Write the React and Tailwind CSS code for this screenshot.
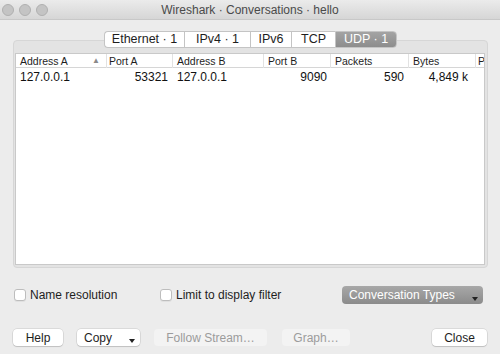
import React from "react";

const cols = "grid grid-cols-[91px_66px_91px_67px_78px_67px_1fr]";

const TrafficLight = () => (
  <div className="w-[12px] h-[12px] rounded-full bg-[#c4c4c4] border border-[#b0b0b0]" />
);

const Tab = ({ label, first, last, active }) => (
  <div
    className={
      "h-[17px] flex items-center justify-center text-[12.5px] leading-none border-y border-l border-[#c4c4c4] " +
      (first ? "rounded-l-[4px] " : "") +
      (last ? "rounded-r-[4px] border-r " : "") +
      (active
        ? "bg-gradient-to-b from-[#a3a3a3] to-[#8d8d8d] text-white border-[#8d8d8d]"
        : "bg-white text-[#1e1e1e]")
    }
  >
    {label}
  </div>
);

const Checkbox = ({ label }) => (
  <label className="flex items-center gap-[4px] text-[12px] text-[#1e1e1e]">
    <span className="w-[12px] h-[12px] rounded-[3px] bg-white border border-[#bdbdbd] shadow-[0_1px_0_rgba(0,0,0,0.05)]" />
    {label}
  </label>
);

const Button = ({ label, width, disabled, arrow }) => (
  <div
    className={
      "relative h-[17px] rounded-[4px] flex items-center text-[12px] leading-none " +
      width +
      (disabled
        ? " bg-[#f3f3f3] text-[#9c9c9c] justify-center"
        : " bg-white text-[#1e1e1e] shadow-[0_0_0_0.5px_rgba(0,0,0,0.15),0_1px_1px_rgba(0,0,0,0.12)]") +
      (arrow ? " pl-[7px]" : disabled ? "" : " justify-center")
    }
  >
    {label}
    {arrow && (
      <span className="absolute right-[5px] bottom-[3px] w-0 h-0 border-l-[3px] border-r-[3px] border-t-[4px] border-l-transparent border-r-transparent border-t-[#222]" />
    )}
  </div>
);

export default function App() {
  return (
    <div className="w-[500px] h-[354px] bg-[#ececec] flex flex-col font-['Liberation_Sans',Arial,sans-serif] overflow-hidden">
      {/* title bar */}
      <div className="relative h-[20px] flex items-center bg-gradient-to-b from-[#ebebeb] to-[#d6d6d6] border-b border-[#c8c8c8]">
        <div className="flex gap-[5px] ml-[2px]">
          <TrafficLight />
          <TrafficLight />
          <TrafficLight />
        </div>
        <div className="absolute inset-0 flex items-center justify-center text-[12px] text-[#4a4a4a]">
          Wireshark · Conversations · hello
        </div>
      </div>

      {/* tabs */}
      <div className="relative z-10 mt-[11px] flex justify-center">
        <div className="flex ml-[1px]">
          <div className="w-[80px]"><Tab label="Ethernet · 1" first /></div>
          <div className="w-[66px]"><Tab label="IPv4 · 1" /></div>
          <div className="w-[41px]"><Tab label="IPv6" /></div>
          <div className="w-[44px]"><Tab label="TCP" /></div>
          <div className="w-[62px]"><Tab label="UDP · 1" last active /></div>
        </div>
      </div>

      {/* panel */}
      <div className="mt-[-8px] ml-[13px] mr-[12px] h-[228px] bg-[#e3e3e3] border border-[#d6d6d6] rounded-[4px] pt-[12px] pl-[1px] pr-[2px] pb-[2px]">
        <div className="h-full bg-white border border-[#c9c9c9] overflow-hidden">
          <div className={cols + " h-[14px] text-[10.5px] leading-[14px] text-[#1e1e1e] border-b border-[#d6d6d6] bg-white"}>
            <div className="pl-[4px] flex justify-between pr-[6px] border-r border-[#e2e2e2]">
              <span>Address A</span>
              <span className="text-[8px] text-[#8a8a8a]">▲</span>
            </div>
            <div className="pl-[2px] border-r border-[#e2e2e2]">Port A</div>
            <div className="pl-[4px] border-r border-[#e2e2e2]">Address B</div>
            <div className="pl-[4px] border-r border-[#e2e2e2]">Port B</div>
            <div className="pl-[4px] border-r border-[#e2e2e2]">Packets</div>
            <div className="pl-[4px] border-r border-[#e2e2e2]">Bytes</div>
            <div className="pl-[2px] whitespace-nowrap">Pa</div>
          </div>
          <div className={cols + " h-[15px] text-[12px] leading-[15px] text-[#111] mt-[2px]"}>
            <div className="pl-[4px]">127.0.0.1</div>
            <div className="text-right pr-[5px]">53321</div>
            <div className="pl-[4px]">127.0.0.1</div>
            <div className="text-right pr-[4px]">9090</div>
            <div className="text-right pr-[5px]">590</div>
            <div className="text-right pr-[8px]">4,849 k</div>
            <div />
          </div>
        </div>
      </div>

      {/* options row */}
      <div className="mt-[18px] flex items-center h-[18px] pl-[14px] pr-[17px]">
        <div className="w-[146px]">
          <Checkbox label="Name resolution" />
        </div>
        <Checkbox label="Limit to display filter" />
        <div className="ml-auto relative w-[141px] h-[18px] rounded-[4px] bg-gradient-to-b from-[#a8a8a8] to-[#8b8b8b] text-white text-[12px] leading-[18px] pl-[7px]">
          Conversation Types
          <span className="absolute right-[5px] bottom-[3px] w-0 h-0 border-l-[3px] border-r-[3px] border-t-[4px] border-l-transparent border-r-transparent border-t-[#222]" />
        </div>
      </div>

      {/* buttons */}
      <div className="mt-[25px] flex items-center pl-[13px] pr-[13px]">
        <Button label="Help" width="w-[50px]" />
        <div className="ml-[14px]">
          <Button label="Copy" width="w-[63px]" arrow />
        </div>
        <div className="ml-[14px]">
          <Button label="Follow Stream…" width="w-[113px]" disabled />
        </div>
        <div className="ml-[15px]">
          <Button label="Graph…" width="w-[68px]" disabled />
        </div>
        <div className="ml-auto">
          <Button label="Close" width="w-[55px]" />
        </div>
      </div>
    </div>
  );
}
